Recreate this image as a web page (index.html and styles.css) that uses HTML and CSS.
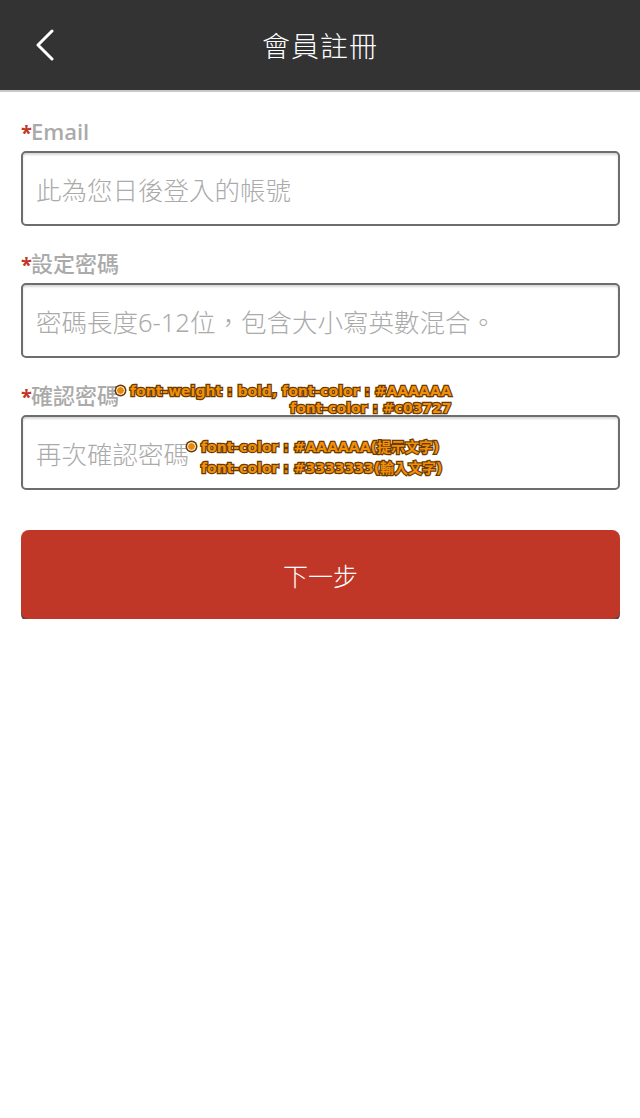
FILE: index.html
```html
<!DOCTYPE html>
<html lang="zh-Hant">
<head>
<meta charset="utf-8">
<title>會員註冊</title>
<link rel="stylesheet" href="styles.css">
</head>
<body>
<header class="topbar">
  <a class="back" aria-label="返回">
    <svg width="20" height="32" viewBox="0 0 20 32"><polyline points="17,2 3,16 17,30" fill="none" stroke="#ffffff" stroke-width="3" stroke-linecap="round" stroke-linejoin="round"/></svg>
  </a>
  <h1 class="title">會員註冊</h1>
</header>
<main class="form">
  <div class="field">
    <label class="label"><span class="req">*</span><span class="latin">Email</span></label>
    <div class="input"><span class="ph">此為您日後登入的帳號</span></div>
  </div>
  <div class="field">
    <label class="label"><span class="req">*</span>設定密碼</label>
    <div class="input"><span class="ph">密碼長度6-12位，包含大小寫英數混合。</span></div>
  </div>
  <div class="field anno-host">
    <label class="label"><span class="req">*</span>確認密碼</label>
    <div class="input"><span class="ph">再次確認密碼</span></div>
    <div class="anno anno-label">
      <span class="dot"></span>
      <div class="anno-lines">
        <span class="anno-text">font-weight : bold, font-color : #AAAAAA</span>
        <span class="anno-text right">font-color : #c03727</span>
      </div>
    </div>
    <div class="anno anno-input">
      <span class="dot"></span>
      <div class="anno-lines">
        <span class="anno-text">font-color : #AAAAAA(提示文字)</span>
        <span class="anno-text">font-color : #3333333(輸入文字)</span>
      </div>
    </div>
  </div>
  <button class="next">下一步</button>
</main>
</body>
</html>
```

FILE: styles.css
```css
html, body {
  margin: 0;
  padding: 0;
  background: #ffffff;
}
body {
  width: 640px;
  font-family: "Noto Sans", "Noto Sans CJK TC", sans-serif;
}
.topbar {
  height: 90px;
  background: #333333;
  border-bottom: 2px solid #c9c9c9;
  display: flex;
  align-items: center;
  justify-content: center;
  position: relative;
}
.back {
  position: absolute;
  left: 35px;
  top: 29px;
  display: flex;
}
.title {
  margin: 0;
  color: #ffffff;
  font-family: "Noto Sans CJK TC", sans-serif;
  font-weight: 300;
  font-size: 28px;
  letter-spacing: 1px;
}
.form {
  padding: 23px 20px 0 21px;
  display: flex;
  flex-direction: column;
}
.field {
  display: flex;
  flex-direction: column;
  gap: 6px;
  margin-bottom: 21px;
}
.label {
  height: 30px;
  line-height: 30px;
  font-size: 22px;
  font-weight: 500;
  color: #aaaaaa;
  font-family: "Noto Sans CJK TC", sans-serif;
}
.latin {
  font-family: "Open Sans", sans-serif;
  font-weight: 600;
}
.req {
  color: #c03727;
  font-weight: 700;
  font-size: 20px;
  font-family: "Open Sans", sans-serif;
  margin-right: -1px;
}
.input {
  height: 71px;
  border: 2px solid #6d6d6d;
  border-radius: 5px;
  box-shadow: inset 0 2px 2px rgba(0,0,0,0.15);
  display: flex;
  align-items: center;
  padding-left: 13px;
}
.ph {
  font-size: 25.5px;
  color: #aaaaaa;
  font-weight: 300;
  font-family: "Noto Sans", "Noto Sans CJK TC", sans-serif;
}
.next {
  margin-top: 19px;
  height: 89px;
  border: none;
  border-radius: 8px;
  background: #c03727;
  box-shadow: 0 3px 0 #5a4440;
  color: #ffffff;
  font-size: 25px;
  font-family: "Noto Sans CJK TC", sans-serif;
  font-weight: 300;
  cursor: pointer;
}
.anno-host {
  position: relative;
}
.anno {
  position: absolute;
  display: flex;
  align-items: flex-start;
  gap: 5px;
}
.anno-label {
  left: 95px;
  top: 4px;
}
.anno-input {
  left: 166px;
  top: 60px;
}
.dot {
  width: 7px;
  height: 7px;
  border-radius: 50%;
  background: #e8890c;
  border: 1.5px solid #ffffff;
  box-shadow: 0 0 0 1.5px #6b3a00;
  margin-top: 3px;
  flex: none;
}
.anno-lines {
  display: flex;
  flex-direction: column;
}
.anno-input .anno-lines {
  gap: 4px;
}
.anno-text {
  font-family: "DejaVu Sans", "Noto Sans CJK TC", sans-serif;
  font-weight: 700;
  font-size: 14px;
  line-height: 17px;
  color: #f0900a;
  -webkit-text-stroke: 2.5px #6b3a00;
  paint-order: stroke fill;
  white-space: nowrap;
}
.anno-text.right {
  align-self: flex-end;
}
```
